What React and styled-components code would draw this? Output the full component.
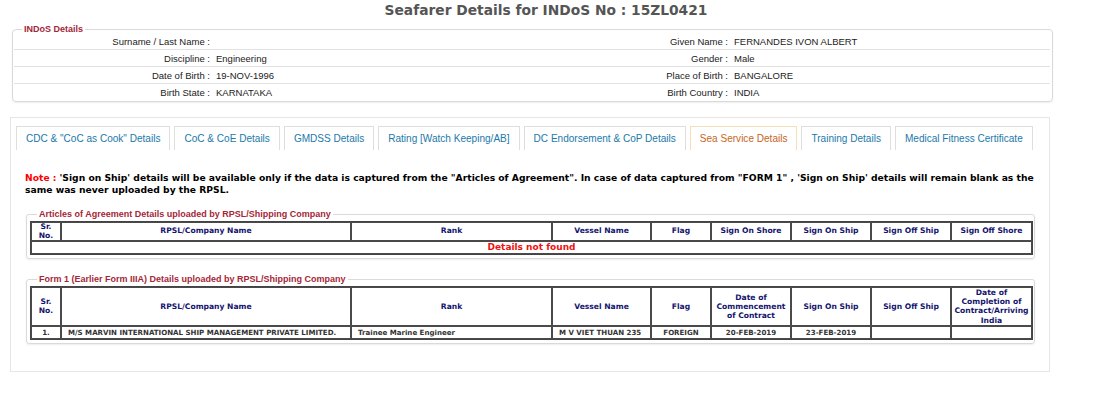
import React from "react";
import styled, { createGlobalStyle } from "styled-components";

const GlobalStyle = createGlobalStyle`
  body {
    margin: 0;
    background: #ffffff;
    font-family: "Liberation Sans", Arial, sans-serif;
  }
`;

const Page = styled.div`
  width: 1104px;
  padding-top: 2px;
`;

const Title = styled.h1`
  margin: 0;
  height: 27px;
  padding-right: 12px;
  text-align: center;
  font-family: "DejaVu Sans", Verdana, sans-serif;
  font-size: 13.8px;
  font-weight: bold;
  line-height: 16px;
  color: #555555;
`;

const Box = styled.div`
  margin: ${(p) => p.$margin};
  width: ${(p) => p.$width};
  padding: ${(p) => p.$pad || "0"};
  border: 1px solid #dadada;
  border-radius: ${(p) => p.$radius || "3px"};
  box-shadow: 0 1px 2px rgba(0, 0, 0, 0.07);
  box-sizing: border-box;
`;

const Caption = styled.div`
  width: fit-content;
  margin: -7px 0 0 ${(p) => p.$indent || "7px"};
  padding: 0 2px;
  background: #ffffff;
  line-height: 12px;
  font-size: 9px;
  font-weight: bold;
  color: #a52638;
  white-space: nowrap;
`;

const InfoGrid = styled.div`
  margin-top: -2px;
  display: grid;
  grid-template-columns: 197px 320px 198px 1fr;
`;

const InfoRow = styled.div`
  display: contents;
`;

const Cell = styled.div`
  height: 17px;
  box-sizing: border-box;
  line-height: 17px;
  font-size: 9.5px;
  color: #222222;
  white-space: nowrap;
  border-bottom: ${(p) => (p.$last ? "none" : "1px solid #e2e2e2")};
  text-align: ${(p) => (p.$label ? "right" : "left")};
  padding: ${(p) => (p.$label ? "0 1px 0 0" : "0 0 0 5px")};
`;

const Panel = styled.div`
  margin: 15px 0 0 10px;
  width: 1040px;
  height: 255px;
  box-sizing: border-box;
  border: 1px solid #e6e6e6;
  padding: 8px 0 0 5px;
`;

const Tabs = styled.div`
  display: flex;
  gap: 4px;
`;

const Tab = styled.div`
  height: 23px;
  line-height: 23px;
  padding: 0 9px;
  font-size: 10.05px;
  border: 1px solid ${(p) => (p.$active ? "#f6dfb4" : "#dedede")};
  border-bottom: none;
  color: ${(p) => (p.$active ? "#c8651b" : "#2279aa")};
  white-space: nowrap;
`;

const Note = styled.p`
  margin: 22px 0 18px 9px;
  width: 1015px;
  font-family: "DejaVu Sans", Verdana, sans-serif;
  font-size: 9.2px;
  font-weight: bold;
  line-height: 12px;
  color: #000000;
`;

const NoteLabel = styled.span`
  color: #ff0000;
  margin-right: 3px;
`;

const Table = styled.table`
  width: 1001px;
  margin-top: 1px;
  border-collapse: separate;
  border-spacing: 0;
  border: 1px solid #444444;
  table-layout: fixed;
  font-family: "DejaVu Sans", Verdana, sans-serif;
`;

const Th = styled.th`
  box-sizing: border-box;
  border: 1px solid #4a4a4a;
  padding: 0;
  height: ${(p) => p.$h};
  font-size: 7.6px;
  line-height: ${(p) => p.$lh};
  font-weight: bold;
  color: #14146e;
  text-align: center;
`;

const Td = styled.td`
  box-sizing: border-box;
  border: 1px solid #4a4a4a;
  padding: ${(p) => (p.$left ? "0 0 0 6px" : "0")};
  height: 13px;
  line-height: 11px;
  font-size: 7.05px;
  font-weight: bold;
  color: #333333;
  text-align: ${(p) => (p.$left ? "left" : "center")};
  white-space: nowrap;
  overflow: hidden;
`;

const EmptyCell = styled.td`
  box-sizing: border-box;
  border: 1px solid #4a4a4a;
  height: 13px;
  padding: 0;
  font-size: 9px;
  line-height: 11px;
  font-weight: bold;
  color: #ee1111;
  text-align: center;
`;

const widths = [30, 290, 201, 99, 60, 80, 80, 80, 81];

const Cols = () => (
  <colgroup>
    {widths.map((w, i) => (
      <col key={i} style={{ width: w }} />
    ))}
  </colgroup>
);

const indos = [
  ["Surname / Last Name :", "", "Given Name :", "FERNANDES IVON ALBERT"],
  ["Discipline :", "Engineering", "Gender :", "Male"],
  ["Date of Birth :", "19-NOV-1996", "Place of Birth :", "BANGALORE"],
  ["Birth State :", "KARNATAKA", "Birth Country :", "INDIA"],
];

const tabs = [
  'CDC & "CoC as Cook" Details',
  "CoC & CoE Details",
  "GMDSS Details",
  "Rating [Watch Keeping/AB]",
  "DC Endorsement & CoP Details",
  "Sea Service Details",
  "Training Details",
  "Medical Fitness Certificate",
];

const articleHeads = [
  <>Sr.<br />No.</>,
  "RPSL/Company Name",
  "Rank",
  "Vessel Name",
  "Flag",
  "Sign On Shore",
  "Sign On Ship",
  "Sign Off Ship",
  "Sign Off Shore",
];

const formHeads = [
  <>Sr.<br />No.</>,
  "RPSL/Company Name",
  "Rank",
  "Vessel Name",
  "Flag",
  "Date of Commencement of Contract",
  "Sign On Ship",
  "Sign Off Ship",
  "Date of Completion of Contract/Arriving India",
];

const formRow = [
  "1.",
  "M/S MARVIN INTERNATIONAL SHIP MANAGEMENT PRIVATE LIMITED.",
  "Trainee Marine Engineer",
  "M V VIET THUAN 235",
  "FOREIGN",
  "20-FEB-2019",
  "23-FEB-2019",
  "",
  "",
];

export default function App() {
  return (
    <Page>
      <GlobalStyle />
      <Title>Seafarer Details for INDoS No : 15ZL0421</Title>

      <Box $margin="0 0 0 12px" $width="1041px" $radius="4px" $pad="0 2px 0 1px">
        <Caption $indent="8px">INDoS Details</Caption>
        <InfoGrid>
          {indos.map((r, i) => (
            <InfoRow key={i}>
              <Cell $label $last={i === 3}>{r[0]}</Cell>
              <Cell $last={i === 3}>{r[1]}</Cell>
              <Cell $label $last={i === 3}>{r[2]}</Cell>
              <Cell $last={i === 3}>{r[3]}</Cell>
            </InfoRow>
          ))}
        </InfoGrid>
      </Box>

      <Panel>
        <Tabs>
          {tabs.map((t) => (
            <Tab key={t} $active={t === "Sea Service Details"}>
              {t}
            </Tab>
          ))}
        </Tabs>

        <Note>
          <NoteLabel>Note :</NoteLabel>
          'Sign on Ship' details will be available only if the data is captured
          from the "Articles of Agreement". In case of data captured from "FORM
          1" , 'Sign on Ship' details will remain blank as the same was never
          uploaded by the RPSL.
        </Note>

        <Box $margin="0 0 0 10px" $width="1009px" $pad="0 3px 3px 3px">
          <Caption $indent="7px">
            Articles of Agreement Details uploaded by RPSL/Shipping Company
          </Caption>
          <Table>
            <Cols />
            <thead>
              <tr>
                {articleHeads.map((h, i) => (
                  <Th key={i} $h="19px" $lh="8.5px">{h}</Th>
                ))}
              </tr>
            </thead>
            <tbody>
              <tr>
                <EmptyCell colSpan={9}>Details not found</EmptyCell>
              </tr>
            </tbody>
          </Table>
        </Box>

        <Box $margin="20px 0 0 10px" $width="1009px" $pad="0 3px 3px 3px">
          <Caption $indent="7px">
            Form 1 (Earlier Form IIIA) Details uploaded by RPSL/Shipping Company
          </Caption>
          <Table>
            <Cols />
            <thead>
              <tr>
                {formHeads.map((h, i) => (
                  <Th key={i} $h="38px" $lh="9.2px">
                    {h}
                  </Th>
                ))}
              </tr>
            </thead>
            <tbody>
              <tr>
                {formRow.map((c, i) => (
                  <Td key={i} $left={i === 1 || i === 2 || i === 3}>
                    {c}
                  </Td>
                ))}
              </tr>
            </tbody>
          </Table>
        </Box>
      </Panel>
    </Page>
  );
}
